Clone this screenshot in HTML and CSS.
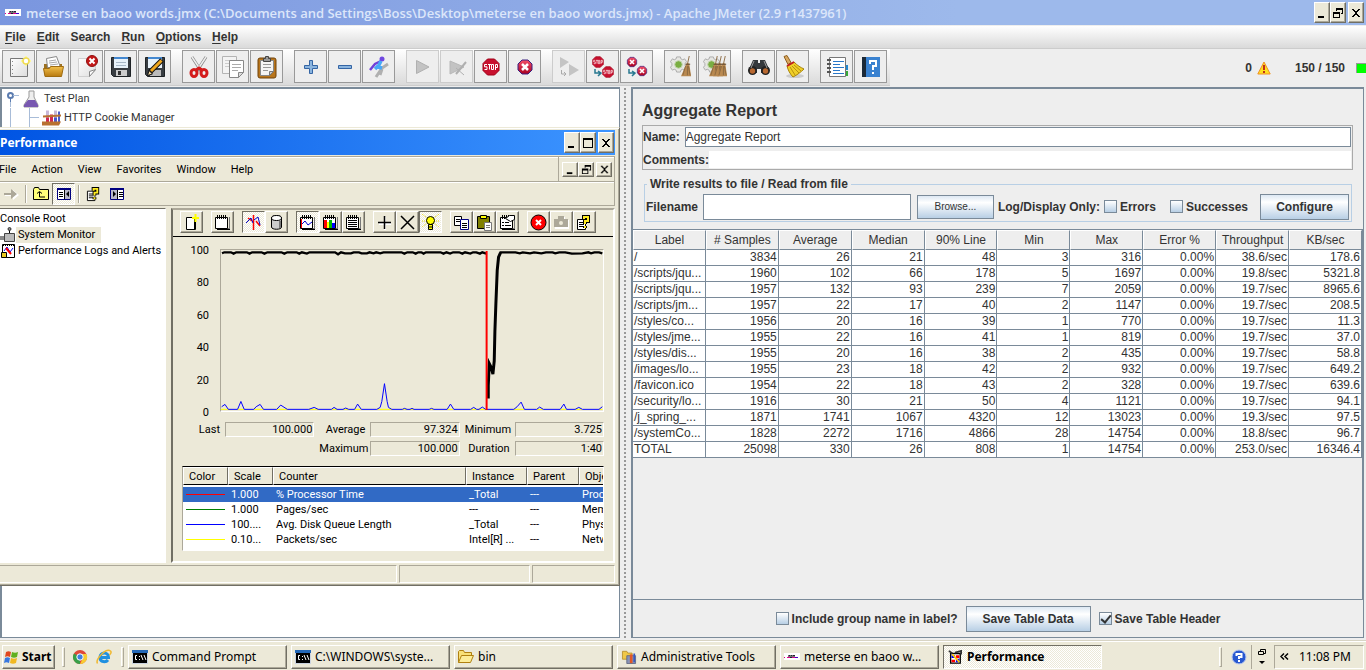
FILE: index.html
```html
<!DOCTYPE html>
<html lang="en">
<head>
<meta charset="utf-8">
<title>Apache JMeter</title>
<link rel="stylesheet" href="styles.css">
</head>
<body>
<svg class="defs" aria-hidden="true">
  <defs>
    <linearGradient id="ball" x1="0" y1="0" x2="0" y2="1"><stop offset="0" stop-color="#f4506a"/><stop offset="1" stop-color="#a80020"/></linearGradient>
    <linearGradient id="gold" x1="0" y1="0" x2="0" y2="1"><stop offset="0" stop-color="#f3c04a"/><stop offset="1" stop-color="#b87a10"/></linearGradient>
    <linearGradient id="sheet" x1="0" y1="0" x2="1" y2="1"><stop offset="0" stop-color="#fff"/><stop offset="1" stop-color="#ddd"/></linearGradient>
    <symbol id="jm" viewBox="0 0 16 7"><path fill="#fff" d="M0 0h16v7H0z"/><path fill="#777" d="M4 2h7v2H4z"/><path fill="#223" d="M5 2h1v1H5zM7 2h1v1H7zM9 2h2v1H9zM6 4h2v1H6z"/><path fill="#d08" d="M0 4h1v1H0zM3 4h3v1H3zM8 4h3v1H8z"/><path fill="#40c" d="M11 4h3v1h-3z"/></symbol>
    <symbol id="min" viewBox="0 0 12 12"><path d="M2 9h6v2H2z"/></symbol>
    <symbol id="max" viewBox="0 0 12 12"><path d="M1 1h10v10H1zM2 3v7h8V3z" fill-rule="evenodd"/></symbol>
    <symbol id="restore" viewBox="0 0 12 12"><path d="M4 1h7v6H9V6h1V3H5v1H4zM1 5h7v6H1zm1 2v3h5V7z" fill-rule="evenodd"/></symbol>
    <symbol id="close" viewBox="0 0 12 12"><path d="M2 2h2v1h1v1h2V3h1V2h2v1H9v1H8v1H7v2h1v1h1v1h1v1H8V9H7V8H5v1H4v1H2V9h1V8h1V7h1V5H4V4H3V3H2z"/></symbol>
    <symbol id="stop8" viewBox="0 0 18 18"><path fill="#c8102e" stroke="#a00018" d="M5.5 1h7L17 5.500v7L12.500 17h-7L1 12.500v-7z"/><path fill="none" stroke="#fff" stroke-width="1" d="M5 6.500H2.500v2.300H5v2.700H2.500M6 6.500h3M7.500 6.500v5M9.500 6.500h2v5h-2zM13.500 12V6.500h2v3h-2"/></symbol>
    <symbol id="xball" viewBox="0 0 18 18"><path fill="url(#ball)" stroke="#3a2080" d="M6 2h6l4 4v6l-4 4H6l-4-4V6z"/><path stroke="#fff" stroke-width="2.500" d="M6 6l6 6M12 6l-6 6"/></symbol>
    <symbol id="gear" viewBox="0 0 18 18"><path fill="#e6e6e2" stroke="#aaa" d="M7 1h4l.5 2 2 1 2-1 2 3-1.500 2v2l1.500 2-2 3-2-1-2 1-.5 2H7l-.5-2-2-1-2 1-2-3L2 10V8L.5 6l2-3 2 1 2-1z"/><circle cx="9" cy="9" r="4" fill="#7aae42" stroke="#c5d5b0"/></symbol>
    <symbol id="broom" viewBox="0 0 12 24"><path fill="#b98950" d="M6 8h3l2 14H0z"/><path stroke="#8a6840" fill="none" d="M9 0L7 9M5 11L2 21M7 11v10M8 11l2 10"/><path stroke="#5c4630" d="M5 9h5"/></symbol>
    <symbol id="notepad" viewBox="0 0 17 17"><path fill="#000" d="M3 15h12v1H3zM15 4h1v12h-1z"/><path fill="#777" d="M2 14h13V3h1v12H2z"/><path fill="#fff" stroke="#000" d="M1.500 3.500h12v11h-12z"/><path stroke="#000" d="M3.500 1v4M5.500 1v4M7.500 1v4M9.500 1v4M11.500 1v4"/></symbol>
    <symbol id="qpage" viewBox="0 0 17 17"><path fill="#fff" stroke="#000" d="M1.500 5.500h8v10h-8z"/><path stroke="#000" d="M3 8.500h5M3 10.500h5M3 12.500h5"/><path fill="none" stroke="#000" stroke-width="4" d="M8 5V3h4v4H9v3M9 12v2"/><path fill="none" stroke="#ffec20" stroke-width="2" d="M8 5V3h4v4H9v3M9 12v2"/></symbol>
    <symbol id="cmd" viewBox="0 0 16 14"><path fill="#ccd4e0" d="M0 0h16v14H0z"/><path fill="#2468b8" d="M0 0h16v3H0z"/><path fill="#000" d="M1 3h14v10H1z"/><path fill="none" stroke="#fff" d="M5 5.500H3.500v4H5M7.500 6v1M7.500 9v1M9 5l2 5M12 5l2 5"/></symbol>
  </defs>
</svg>

<div class="desktop">
  <header class="titlebar titlebar-idle">
    <svg class="jm"><use href="#jm"/></svg>
    <h1 class="titlebar-text">meterse en baoo words.jmx (C:\Documents and Settings\Boss\Desktop\meterse en baoo words.jmx) - Apache JMeter (2.9 r1437961)</h1>
    <div class="win-controls">
      <button class="wbtn" aria-label="Minimize"><svg><use href="#min"/></svg></button><button class="wbtn" aria-label="Restore"><svg><use href="#restore"/></svg></button><button class="wbtn wbtn-close" aria-label="Close"><svg><use href="#close"/></svg></button>
    </div>
  </header>

  <nav class="menubar">
    <button><u>F</u>ile</button><button><u>E</u>dit</button><button>Search</button><button><u>R</u>un</button><button><u>O</u>ptions</button><button><u>H</u>elp</button>
  </nav>

  <div class="toolrow">
    <div class="toolbar">
      <div class="tgroup">
        <button aria-label="New"><svg viewBox="0 0 24 24"><path fill="url(#sheet)" stroke="#777" d="M3.500 3.500h17v18h-17z"/><path stroke="#888" stroke-dasharray="1 3" d="M5.500 6v13"/><path stroke="#fff9a0" stroke-width="2" d="M19 1v10M14 6h10"/><circle cx="19" cy="6" r="3" fill="#fff" stroke="#f0dc50" stroke-width="1.500"/></svg></button>
        <button aria-label="Open"><svg viewBox="0 0 24 24"><path fill="#9c7020" d="M3 9h4v10H3zM17 9h4v10h-4z"/><path fill="#fff" stroke="#888" d="M5.500 3.500l10-2 4 11h-13z"/><path stroke="#aaa" d="M8 6l7-1M8 8l8-1M9 10l8-1"/><path fill="url(#gold)" stroke="#a06c10" d="M2.500 13.500h6l1-2h13l-2 10H4z"/></svg></button>
        <button aria-label="Close"><svg viewBox="0 0 24 24"><path fill="url(#sheet)" stroke="#d0d0d0" d="M3.500 3.500h17v12l-6 6h-11z"/><path fill="#fff" stroke="#888" d="M20.500 14.500l-6 7v-5z"/><circle cx="17" cy="6" r="5.500" fill="#c41818" stroke="#901010"/><path stroke="#fff" stroke-width="2" d="M14.500 3.500l5 5M19.500 3.500l-5 5"/></svg></button>
        <button aria-label="Save"><svg viewBox="0 0 24 24"><path fill="#383d42" stroke="#1e2225" d="M2.500 2.500h19v19h-17l-2-2z"/><path fill="#e8f2fa" d="M5 3h14v10H5z"/><path fill="#4488d0" d="M5 2h14v2H5z"/><path stroke="#a8b8c8" d="M7 7.500h10M7 10.500h10"/><path fill="#ccc" d="M7 15h11v6H7z"/><path fill="#333" d="M9 16h3v4H9z"/></svg></button>
        <button aria-label="Save as"><svg viewBox="0 0 24 24"><path fill="#383d42" stroke="#1e2225" d="M2.500 2.500h19v19h-17l-2-2z"/><path fill="#e8f2fa" d="M5 3h14v10H5z"/><path fill="#4488d0" d="M5 2h14v2H5z"/><path fill="#bbb" d="M7 15h11v6H7z"/><path stroke="#111" stroke-width="5" d="M19 5L7 17"/><path stroke="#f0a820" stroke-width="3" d="M18.500 5.500L8 16"/><path fill="#f4d8a0" stroke="#111" d="M4.500 20.500l1.500-5 3.500 3.500z"/></svg></button>
      </div>
      <div class="tgroup">
        <button aria-label="Cut"><svg viewBox="0 0 24 24"><path stroke="#888" stroke-width="3" d="M5 2l9 14M19 2l-9 14"/><path stroke="#eee" stroke-width="1.500" d="M5 2l8 12M19 2l-8 12"/><g fill="none" stroke="#d41c1c" stroke-width="3"><ellipse cx="7" cy="18" rx="3" ry="3.500"/><ellipse cx="17" cy="18" rx="3" ry="3.500"/><path d="M9 15l3-2 3 2"/></g></svg></button>
        <button aria-label="Copy"><svg viewBox="0 0 24 24"><path fill="#f3f3f3" stroke="#b4b4b4" d="M1.500 1.500h14v17h-14z"/><path stroke="#ccc" d="M4 5.500h9M4 8.500h9M4 11.500h9"/><path fill="#fff" stroke="#888" d="M8.500 5.500h14v12l-5 5h-9z"/><path stroke="#aaa" d="M11 9.500h9M11 12.500h9M11 15.500h6"/><path fill="#ddd" stroke="#888" d="M22.500 17.500h-5v5z"/></svg></button>
        <button aria-label="Paste"><svg viewBox="0 0 24 24"><rect x="3" y="3" width="18" height="20" rx="2" fill="#b8751c" stroke="#704208"/><path fill="#f5f5f5" stroke="#888" d="M5.500 5.500h13v11l-4 4h-9z"/><path stroke="#999" d="M8 9.500h8M8 12.500h8M8 15.500h5"/><path fill="#999" stroke="#444" d="M8.500 3.500h2v-2h3v2h2v3h-7z"/><path fill="#ccc" stroke="#777" d="M18.500 16.500h-4v4z"/></svg></button>
      </div>
      <div class="tgroup">
        <button aria-label="Expand all"><svg viewBox="0 0 24 24"><path fill="#8ab4de" stroke="#3465a4" d="M10.500 5.500h3v5h5v3h-5v5h-3v-5h-5v-3h5z"/></svg></button>
        <button aria-label="Collapse all"><svg viewBox="0 0 24 24"><path fill="#8ab4de" stroke="#3465a4" d="M5.500 10.500h13v3h-13z"/></svg></button>
        <button aria-label="Toggle"><svg viewBox="0 0 24 24"><path stroke="#b0b0b0" stroke-width="3" fill="none" d="M9 22l6-9 6-4M15 14l-2 6"/><path stroke="#7040d8" stroke-width="2.500" fill="none" d="M3 15l5-6 6-3"/><circle cx="15" cy="4" r="2.500" fill="#7048e0"/><path stroke="#48a8f8" stroke-width="3.500" fill="none" d="M14 6l-3 6 4 1M11 11l-3 3"/></svg></button>
      </div>
      <div class="tgroup">
        <button disabled aria-label="Start"><svg viewBox="0 0 24 24"><path fill="#c3c3c3" stroke="#b0b0b0" d="M5.500 5.500L18 12 5.500 18.500z"/></svg></button>
        <button disabled aria-label="Start no pauses"><svg viewBox="0 0 24 24"><path fill="#c3c3c3" stroke="#b8b8b8" d="M5 6l14 6-14 7z"/><path stroke="#b0b0b0" stroke-width="2" d="M11 19L21 7"/><path stroke="#b0b0b0" d="M11 13l8 7"/></svg></button>
        <button aria-label="Stop"><svg viewBox="-3 -3 24 24"><use href="#stop8" width="18" height="18"/></svg></button>
        <button aria-label="Shutdown"><svg viewBox="-3 -3 24 24"><use href="#xball" width="18" height="18"/></svg></button>
      </div>
      <div class="tgroup">
        <button disabled aria-label="Remote start all"><svg viewBox="0 0 24 24"><path fill="#c4c4c4" d="M3 2l9 5-9 6zM12 9l10 6-10 6z"/><path stroke="#aaa" fill="none" d="M4.500 15v4H9M7 17l2 2-2 2"/></svg></button>
        <button aria-label="Remote stop all"><svg viewBox="0 0 24 24"><use href="#stop8" x="1" y="1" width="12" height="12"/><use href="#stop8" x="11" y="11" width="12" height="12"/><path stroke="#287890" stroke-width="1.500" fill="none" d="M4 14v4h6M7 16l3 2-3 3"/></svg></button>
        <button aria-label="Remote shutdown all"><svg viewBox="0 0 24 24"><use href="#xball" x="1" y="1" width="12" height="12"/><use href="#xball" x="11" y="10" width="12" height="12"/><path stroke="#287890" stroke-width="1.500" fill="none" d="M4 14v4h6M7 16l3 2-3 3"/></svg></button>
      </div>
      <div class="tgroup">
        <button aria-label="Clear"><svg viewBox="0 0 24 24"><use href="#gear" x="1" y="1" width="17" height="17"/><use href="#broom" x="12" y="1" width="11" height="22"/></svg></button>
        <button aria-label="Clear all"><svg viewBox="0 0 24 24"><use href="#gear" x="0" y="1" width="17" height="17"/><use href="#broom" x="6" y="1" width="11" height="22"/><use href="#broom" x="10" y="1" width="11" height="22"/><use href="#broom" x="14" y="1" width="11" height="22"/></svg></button>
      </div>
      <div class="tgroup">
        <button aria-label="Search"><svg viewBox="0 0 24 24"><path fill="#35393c" d="M6 5h5v3h2V5h5l4 9v4h-8v-4h-4v4H2v-4z"/><circle cx="5.500" cy="15.500" r="4.500" fill="#222"/><circle cx="18.500" cy="15.500" r="4.500" fill="#222"/><circle cx="5.500" cy="16" r="2.700" fill="#b86830"/><circle cx="18.500" cy="16" r="2.700" fill="#b86830"/><path stroke="#999" d="M7 6l-3 7M17 6l3 7"/></svg></button>
        <button aria-label="Reset search"><svg viewBox="0 0 24 24"><ellipse cx="14" cy="21" rx="9" ry="2" fill="#ccc"/><path fill="#d8a860" stroke="#906020" d="M3 1.500l3-1 4 7-3 2z"/><path fill="#f0d028" stroke="#a88408" d="M6 11l7-4c4 4 6 5 10 7-3 3-7 6-11 8-3-3-5-7-6-11z"/><path stroke="#c02020" stroke-width="2" d="M6 11l7-4"/><path stroke="#b89010" fill="none" d="M9 12l5 8M11 11l7 7M13 10l7 6"/></svg></button>
      </div>
      <div class="tgroup">
        <button aria-label="Function helper"><svg viewBox="0 0 24 24"><path fill="#2288d0" d="M20 10h3v5h-3z"/><path fill="#38a838" d="M20 16h3v5h-3z"/><path fill="#fff" stroke="#777" d="M4.500 2.500h16v19h-16z"/><path stroke="#2a78c8" d="M8 6.500h11M8 9.500h7M8 12.500h11M8 15.500h7M8 18.500h11"/><path stroke="#555" stroke-width="2" d="M2 5h4M2 9h4M2 13h4M2 17h4"/></svg></button>
        <button aria-label="Help"><svg viewBox="0 0 24 24"><path fill="#1c2a38" d="M3 2h18v20H3z"/><path fill="#3a82d0" d="M7 2h14v20H7z"/><path fill="none" stroke="#fff" stroke-width="2" d="M11 9V6h6v5h-3v4M14 17v2"/></svg></button>
      </div>
    </div>
    <div class="run-state">
      <span>0</span>
      <svg class="warn" viewBox="0 0 14 14"><path fill="#ffe020" stroke="#f09020" stroke-linejoin="round" d="M7 1l6.200 12H.8z"/><path fill="#c03018" d="M6 4h2v5H6zM6 10h2v2H6z"/></svg>
      <span class="threads">150 / 150</span>
      <span class="lamp"></span>
    </div>
  </div>

  <main class="split">
    <section class="left">
      <ul class="tree">
        <li><svg class="knob" viewBox="0 0 12 17"><circle cx="3.500" cy="5.500" r="2.500" fill="#fff" stroke="#5b7cb0" stroke-width="2"/><path stroke="#5b7cb0" d="M3.500 8v4"/><path stroke="#a8bcd8" d="M6 5.500h6M3.500 12v5"/></svg><svg class="ticon" viewBox="0 0 16 18"><path fill="#eee" stroke="#999" d="M6 1h5v6l4 8v2H1v-2l5-8z"/><path fill="#7858b0" d="M5 10h7l3 5v2H1v-2z"/></svg>Test Plan</li>
        <li class="child"><svg class="ticon wide" viewBox="0 0 20 17"><path fill="#c8b8d8" d="M4 1h3v13H4zM12 1h3v13h-3z"/><path fill="#d02850" d="M8 5h3v9H8zM4 8h3v6H4z"/><path fill="#4858c8" d="M16 2h2v12h-2zM12 8h3v6h-3z"/><path fill="#b87030" d="M1 6l18-1v2L1 8zM0 12h19l-2 4H0z"/></svg>HTTP Cookie Manager</li>
      </ul>

      <section class="perf">
        <header class="titlebar titlebar-active">
          <h2 class="titlebar-text">Performance</h2>
          <div class="win-controls">
            <button class="wbtn" aria-label="Minimize"><svg><use href="#min"/></svg></button><button class="wbtn" aria-label="Maximize"><svg><use href="#max"/></svg></button><button class="wbtn wbtn-close" aria-label="Close"><svg><use href="#close"/></svg></button>
          </div>
        </header>
        <div class="perf-menu">
          <nav><button>File</button><button>Action</button><button>View</button><button>Favorites</button><button>Window</button><button>Help</button></nav>
          <div class="win-controls child-controls">
            <button class="wbtn" aria-label="Minimize console"><svg><use href="#min"/></svg></button><button class="wbtn" aria-label="Restore console"><svg><use href="#restore"/></svg></button><button class="wbtn wbtn-close" aria-label="Close console"><svg><use href="#close"/></svg></button>
          </div>
        </div>
        <div class="perf-tools">
          <button aria-label="Forward"><svg viewBox="0 0 16 16"><path fill="#fff" d="M2 8h8V4l6 5-6 5v-4H2z"/><path fill="#aca899" d="M1 7h7V3l6 5-6 5V9H1z"/></svg></button>
          <i class="vsep"></i>
          <button aria-label="Up one level"><svg viewBox="0 0 16 16"><path fill="#ffff7a" stroke="#000" d="M.5 3.500l1-2h4l1 2h9v10H.5z"/><path fill="none" stroke="#000" d="M4 7.500l2.500-2 2.500 2M6.500 6v5H12"/></svg></button>
          <button class="down" aria-label="Show console tree"><svg viewBox="0 0 16 16"><path fill="#fff" stroke="#000080" d="M1.500 2.500h13v11h-13z"/><path fill="#000080" d="M1 2h14v2H1z"/><path fill="#b8b8c8" d="M9 4h5v9H9z"/><path stroke="#000" d="M8.500 4v9M3 6.500h4M3 8.500h4M3 10.500h4"/><path d="M13 5v6l-3-3z"/></svg></button>
          <i class="vsep"></i>
          <button aria-label="Help"><svg><use href="#qpage"/></svg></button>
          <button aria-label="Show action pane"><svg viewBox="0 0 16 16"><path fill="#fff" stroke="#000080" d="M1.500 2.500h13v11h-13z"/><path fill="#000080" d="M1 2h14v2H1z"/><path fill="#b8b8c8" d="M2 4h6v9H2z"/><path stroke="#000" d="M8.500 4v9M10 6.500h4M10 8.500h4M10 10.500h4"/><path d="M4 5v6l3-3z"/></svg></button>
        </div>
        <div class="perf-body">
          <ul class="console">
            <li>Console Root</li>
            <li class="picked"><svg viewBox="0 0 16 16"><path stroke="#000" d="M9.500 2v5M0 12h3"/><circle cx="9.500" cy="2" r="1.500" fill="#888" stroke="#333"/><path fill="#bbb" stroke="#444" d="M4.500 6.500h10v8h-10z"/><path fill="#888" d="M0 9h4v4H0z"/></svg><span>System Monitor</span></li>
            <li><svg viewBox="0 0 16 16"><path fill="#fff" stroke="#000" d="M2.500 1.500h12v13h-12z"/><path stroke="#000" stroke-width="2" stroke-dasharray="1 1" d="M3 2h11"/><path fill="none" stroke="#00f" d="M4 8l3-4 3 5 3-4"/><path fill="none" stroke="#f00" stroke-width="2" d="M6 5l5 6"/><path fill="#e8c820" stroke="#000" d="M1.500 9.500h5v5h-5z"/></svg><span>Performance Logs and Alerts</span></li>
          </ul>
          <div class="monitor">
            <div class="mon-tools">
              <div><button aria-label="New counter set"><svg viewBox="0 0 17 17"><path fill="#fff" stroke="#000" d="M3.500 3.500h9v12h-9z"/><path stroke="#000" d="M11.500 5v11"/><path stroke="#ff0" stroke-width="2" d="M9 4h7M12.500 0v8"/></svg></button></div>
              <div><button aria-label="Clear display"><svg><use href="#notepad"/></svg></button></div>
              <div><button class="down" aria-label="View current activity"><svg viewBox="0 0 17 17"><path stroke="#f00" stroke-width="1.500" d="M8.500 1v15M3 4l4 3M11 7l4 5"/><path fill="none" stroke="#00c" d="M1 9l5-5 2 5M9 6l4-3 2 8"/></svg></button><button aria-label="View log data"><svg viewBox="0 0 17 17"><path fill="#ccc" stroke="#000" d="M3.500 4c0-3 10-3 10 0v9c0 3-10 3-10 0z"/><ellipse cx="8.500" cy="4" rx="5" ry="2.500" fill="#fff" stroke="#000"/><path fill="#777" d="M11 7h2v7h-2z"/></svg></button></div>
              <div><button class="down" aria-label="View graph"><svg viewBox="0 0 17 17"><use href="#notepad" width="17" height="17"/><path fill="none" stroke="#00c" d="M3 10l3-3 3 4 4-3"/><path stroke="#f00" d="M2.500 5v9"/></svg></button><button aria-label="View histogram"><svg viewBox="0 0 17 17"><use href="#notepad" width="17" height="17"/><path fill="#f00" d="M2 6h3v8H2z"/><path fill="#ff0" d="M5 8h2v6H5z"/><path fill="#0b0" d="M7 6h3v8H7z"/><path fill="#00f" d="M10 9h3v5h-3z"/></svg></button><button aria-label="View report"><svg viewBox="0 0 17 17"><use href="#notepad" width="17" height="17"/><path stroke="#000" d="M3 6.500h9M3 8.500h9M3 10.500h9M3 12.500h9"/></svg></button></div>
              <div><button aria-label="Add"><svg viewBox="0 0 17 17"><path stroke="#fff" stroke-width="2" d="M9 3v13M3 10h12"/><path stroke="#000" stroke-width="1.500" d="M8.500 2v13M2 8.500h13"/></svg></button><button aria-label="Delete"><svg viewBox="0 0 17 17"><path stroke="#000" stroke-width="1.500" d="M2 2l13 13M15 2L2 15"/></svg></button><button class="down" aria-label="Highlight"><svg viewBox="0 0 17 17"><path stroke="#e8d800" stroke-dasharray="1 1" d="M0 0l17 13M17 0L0 13M0 7h17"/><circle cx="8.500" cy="6.500" r="4" fill="#ff0" stroke="#000"/><path fill="#ff0" stroke="#000" d="M6.500 10.500h4v5h-4zM6 13h5"/></svg></button></div>
              <div><button aria-label="Copy properties"><svg viewBox="0 0 17 17"><path fill="#fff" stroke="#000" d="M1.500 2.500h7v9h-7z"/><path fill="#fff" stroke="#000080" d="M7.500 5.500h8v10h-8z"/><path stroke="#000" d="M3 5.500h4M3 7.500h4M9 9.500h5M9 11.500h5M9 13.500h5"/></svg></button><button aria-label="Paste counter list"><svg viewBox="0 0 17 17"><path fill="#808000" stroke="#000" d="M1.500 2.500h12v12h-12z"/><path fill="#ff0" stroke="#000" d="M4.500 1.500h6v3h-6z"/><path fill="#fff" stroke="#777" d="M8.500 8.500h7v8h-7z"/><path stroke="#777" d="M10 11.500h4M10 13.500h4"/></svg></button><button aria-label="Properties"><svg viewBox="0 0 17 17"><use href="#notepad" width="17" height="17"/><path stroke="#000" d="M3 8.500h2M6 8.500h4M3 11.500h2M6 11.500h6"/><path fill="#fff" stroke="#000" d="M6.500 4.500l4-3h5v4l-4 2z"/></svg></button></div>
              <div><button aria-label="Freeze display"><svg viewBox="0 0 17 17"><circle cx="8.500" cy="8.500" r="7.500" fill="#f00" stroke="#000"/><path stroke="#fff" stroke-width="2" d="M6 6l5 5M11 6l-5 5"/></svg></button><button aria-label="Update data"><svg viewBox="0 0 17 17"><path fill="#fff" d="M2 6h4V3h6v3h4v9H2z"/><path fill="#aca899" d="M1 5h4V2h6v3h4v8H1z"/><circle cx="8" cy="9" r="2" fill="#ece9d8"/></svg></button><button aria-label="Help on monitor"><svg><use href="#qpage"/></svg></button></div>
            </div>
            <div class="mon-main">
              <div class="graph">
                <div class="axis"><span>100</span><span>80</span><span>60</span><span>40</span><span>20</span><span>0</span></div>
                <svg class="chart" viewBox="150 27 1152 489" preserveAspectRatio="none" role="img" aria-label="Counter history">
                  <path stroke="#ff0" stroke-width="3" d="M150 511h24M200 511h20M249 511h30M318 511h34M415 511h30M483 511h18M518 511h18M553 511h20M622 511h44M695 511h16M718 511h14M778 511h14M832 511h18M903 511h18M925 511h28M1032 511h32M1102 511h20M1174 511h18M1218 511h20M1290 511h10"/>
                  <path fill="none" stroke="#00f" stroke-width="3" d="M152 503L162 496L172 511H200L210 487L220 511H249L256 503L268 496L278 511H318L330 498L350 511H415L431 505L443 511H483L491 505L500 511H518L526 507L535 511H553L562 495L573 511H620L630 505L635 487L643 433L651 487L655 505L665 511H697L703 508L711 511H720L726 508L732 511H778L785 508L792 511H832L842 495L852 511H903L912 505L921 511H928L938 504L948 511H1033L1043 503L1055 489L1065 511H1102L1111 504L1122 511H1173L1184 495L1192 511H1218L1229 505L1240 511H1290L1300 503"/>
                  <path fill="none" stroke="#000" stroke-width="7" d="M153 37L160 34H180L188 38L196 34H228L236 38L244 34H272L281 38L290 34H332L341 38L350 34H378L386 38L394 34L409 38L417 34H494L503 40L512 34L524 37H542L550 34H566L574 37H590L598 34L610 37L618 34L630 37L640 34H694L703 38L712 34H728L737 38L745 34H754L761 38L768 34H812L821 38L830 34L841 38L850 34H868L878 38L886 34L902 38L910 34H920L931 38L938 34L950 38"/>
                  <path fill="none" stroke="#000" stroke-width="9" d="M956 478v-40l3-66 6 12 5 20 4-40 2-90 3-85 4-100 4-40 6-14"/>
                  <path fill="none" stroke="#000" stroke-width="7" d="M990 34H1038L1051 37L1060 34L1082 37L1094 34L1116 37L1130 34H1150L1158 37L1170 34H1188L1208 38L1240 37L1258 34L1266 37L1276 34H1290L1300 37"/>
                  <path stroke="#f00" stroke-width="6" d="M951 30v483"/>
                </svg>
              </div>
              <dl class="readings">
                <dt>Last</dt><dd>100.000</dd><dt>Average</dt><dd>97.324</dd><dt>Minimum</dt><dd>3.725</dd>
                <dt class="third">Maximum</dt><dd>100.000</dd><dt>Duration</dt><dd>1:40</dd>
              </dl>
              <div class="legend-box">
                <table class="legend">
                  <colgroup><col class="c1"><col class="c2"><col><col class="c4"><col class="c5"><col class="c6"></colgroup>
                  <thead><tr><th>Color</th><th>Scale</th><th>Counter</th><th>Instance</th><th>Parent</th><th>Object</th></tr></thead>
                  <tbody>
                    <tr class="sel"><td><i class="swatch red"></i></td><td>1.000</td><td>% Processor Time</td><td>_Total</td><td>---</td><td>Processor</td></tr>
                    <tr><td><i class="swatch green"></i></td><td>1.000</td><td>Pages/sec</td><td>---</td><td>---</td><td>Memory</td></tr>
                    <tr><td><i class="swatch blue"></i></td><td>100....</td><td>Avg. Disk Queue Length</td><td>_Total</td><td>---</td><td>PhysicalDisk</td></tr>
                    <tr><td><i class="swatch yellow"></i></td><td>0.10...</td><td>Packets/sec</td><td>Intel[R] ...</td><td>---</td><td>Network</td></tr>
                  </tbody>
                </table>
              </div>
            </div>
          </div>
        </div>
        <footer class="status"><span></span><span></span><span></span></footer>
      </section>
    </section>

    <div class="divider"></div>

    <section class="report">
      <h2 class="report-title">Aggregate Report</h2>
      <div class="ident">
        <div class="field"><label for="name">Name:</label><input id="name" type="text" value="Aggregate Report"></div>
        <div class="field plain"><label for="comments">Comments:</label><input id="comments" type="text"></div>
      </div>
      <fieldset class="filebox">
        <legend>Write results to file / Read from file</legend>
        <div class="filerow">
          <label for="filename">Filename</label><input id="filename" type="text">
          <button class="jbtn small">Browse...</button>
          <span class="only">Log/Display Only:</span>
          <label class="check"><input type="checkbox">Errors</label>
          <label class="check"><input type="checkbox">Successes</label>
          <button class="jbtn conf">Configure</button>
        </div>
      </fieldset>
      <div class="grid-scroll">
        <table class="results">
          <thead><tr><th>Label</th><th># Samples</th><th>Average</th><th>Median</th><th>90% Line</th><th>Min</th><th>Max</th><th>Error %</th><th>Throughput</th><th>KB/sec</th></tr></thead>
          <tbody>
            <tr><td>/</td><td>3834</td><td>26</td><td>21</td><td>48</td><td>3</td><td>316</td><td>0.00%</td><td>38.6/sec</td><td>178.6</td></tr>
            <tr><td>/scripts/jqu...</td><td>1960</td><td>102</td><td>66</td><td>178</td><td>5</td><td>1697</td><td>0.00%</td><td>19.8/sec</td><td>5321.8</td></tr>
            <tr><td>/scripts/jqu...</td><td>1957</td><td>132</td><td>93</td><td>239</td><td>7</td><td>2059</td><td>0.00%</td><td>19.7/sec</td><td>8965.6</td></tr>
            <tr><td>/scripts/jm...</td><td>1957</td><td>22</td><td>17</td><td>40</td><td>2</td><td>1147</td><td>0.00%</td><td>19.7/sec</td><td>208.5</td></tr>
            <tr><td>/styles/co...</td><td>1956</td><td>20</td><td>16</td><td>39</td><td>1</td><td>770</td><td>0.00%</td><td>19.7/sec</td><td>11.3</td></tr>
            <tr><td>/styles/jme...</td><td>1955</td><td>22</td><td>16</td><td>41</td><td>1</td><td>819</td><td>0.00%</td><td>19.7/sec</td><td>37.0</td></tr>
            <tr><td>/styles/dis...</td><td>1955</td><td>20</td><td>16</td><td>38</td><td>2</td><td>435</td><td>0.00%</td><td>19.7/sec</td><td>58.8</td></tr>
            <tr><td>/images/lo...</td><td>1955</td><td>23</td><td>18</td><td>42</td><td>2</td><td>932</td><td>0.00%</td><td>19.7/sec</td><td>649.2</td></tr>
            <tr><td>/favicon.ico</td><td>1954</td><td>22</td><td>18</td><td>43</td><td>2</td><td>328</td><td>0.00%</td><td>19.7/sec</td><td>639.6</td></tr>
            <tr><td>/security/lo...</td><td>1916</td><td>30</td><td>21</td><td>50</td><td>4</td><td>1121</td><td>0.00%</td><td>19.7/sec</td><td>94.1</td></tr>
            <tr><td>/j_spring_...</td><td>1871</td><td>1741</td><td>1067</td><td>4320</td><td>12</td><td>13023</td><td>0.00%</td><td>19.3/sec</td><td>97.5</td></tr>
            <tr><td>/systemCo...</td><td>1828</td><td>2272</td><td>1716</td><td>4866</td><td>28</td><td>14754</td><td>0.00%</td><td>18.8/sec</td><td>96.7</td></tr>
            <tr><td>TOTAL</td><td>25098</td><td>330</td><td>26</td><td>808</td><td>1</td><td>14754</td><td>0.00%</td><td>253.0/sec</td><td>16346.4</td></tr>
          </tbody>
        </table>
      </div>
      <div class="save-row">
        <label class="check"><input type="checkbox">Include group name in label?</label>
        <button class="jbtn save">Save Table Data</button>
        <label class="check"><input type="checkbox" checked>Save Table Header</label>
      </div>
    </section>
  </main>

  <footer class="taskbar">
    <button class="start"><svg viewBox="0 0 16 16"><path fill="#e04820" d="M2 3c2-1 3-1 5 0L6 8c-2-1-3-1-5 0z"/><path fill="#60b020" d="M8 3c2 1 4 1 6 0l-1 5c-2 1-4 1-6 0z"/><path fill="#3878e0" d="M1 9c2-1 3-1 5 0l-1 5c-2-1-3-1-5 0z"/><path fill="#f0b820" d="M7 9c2 1 4 1 6 0l-1 5c-2 1-4 1-6 0z"/></svg>Start</button>
    <i class="tsep"></i>
    <div class="quick">
      <button aria-label="Chrome"><svg viewBox="0 0 16 16"><circle cx="8" cy="8" r="7" fill="#e04838"/><path fill="#38a048" d="M8 8L2 4.400A7 7 0 0 0 8 15z"/><path fill="#f8cc30" d="M8 15l3.500-7L9 5h5.500A7 7 0 0 1 8 15z"/><circle cx="8" cy="8" r="3.200" fill="#4080e0" stroke="#fff"/></svg></button>
      <button aria-label="Internet Explorer"><svg viewBox="0 0 16 16"><path fill="none" stroke="#2090e0" stroke-width="3" d="M3.500 8.500h9c0-6-8.500-6-8.500 0 0 5 6 5 8 2.500"/><path fill="none" stroke="#f0b830" stroke-width="1.500" d="M1.500 14.500C-1 10 10-1 14.500 2c1 1 0 3-1 4"/></svg></button>
    </div>
    <i class="tsep"></i>
    <div class="tasks">
      <button><svg class="ic"><use href="#cmd"/></svg><span>Command Prompt</span></button>
      <button><svg class="ic"><use href="#cmd"/></svg><span>C:\WINDOWS\syste...</span></button>
      <button><svg class="ic" viewBox="0 0 16 14"><path fill="#f8e078" stroke="#b08010" d="M.5 12.500v-11l1-1h4l1 2h7v3"/><path fill="#fcec98" stroke="#b08010" d="M.5 12.500l3-7h12l-3 7z"/></svg><span>bin</span></button>
      <button><svg class="ic" viewBox="0 0 16 16"><path fill="#f0c848" stroke="#b89030" d="M.5 1.500h5l1 2h5v7H.5z"/><path fill="#8894b8" stroke="#606880" d="M5.500 6.500h10v9h-10z"/><path fill="#e05828" d="M9 5h3v10H9z"/><path fill="#3858c0" d="M13 4h2v10h-2z"/></svg><span>Administrative Tools</span></button>
      <button><svg class="jm"><use href="#jm"/></svg><span>meterse en baoo w...</span></button>
      <button class="current"><svg class="ic" viewBox="0 0 16 16"><path fill="#fff" stroke="#000" stroke-width="1.500" d="M3 4h11v11H3z"/><path fill="#00f" d="M4 6h4v3H4zM9 10h4v4H9z"/><path fill="#f00" d="M4 11h4v3H4zM9 6h4v3H9z"/><path stroke="#fc0" stroke-width="2" d="M5 5l8 9"/><path stroke="#333" stroke-width="2" fill="none" d="M1 1l4 3M8 3l7-2v4"/></svg><span>Performance</span></button>
    </div>
    <i class="tsep lone"></i>
    <button class="qhelp" aria-label="Help and support"><svg viewBox="0 0 16 16"><circle cx="8" cy="8" r="7" fill="#2858d0" stroke="#b8c8f0"/><path fill="none" stroke="#fff" stroke-width="2" d="M5.500 7V5h5v3H8v2M8 11v2"/></svg></button>
    <i class="tsep thin"></i>
    <button class="stack" aria-label="Restore toolbar"><svg viewBox="0 0 10 17"><path fill="none" stroke="#000" d="M3.500 3V1.500h5v4H7M1.500 3.500h5v3h-5z"/><path d="M2 13h6l-3 3z"/></svg></button>
    <div class="tray"><button aria-label="Show hidden icons"><svg viewBox="0 0 9 7"><path fill="none" stroke="#000" stroke-width="1.500" d="M4 .5l-3 3 3 3M8 .5l-3 3 3 3"/></svg></button><time>11:08 PM</time></div>
  </footer>
</div>
</body>
</html>
```
FILE: styles.css
```css
* { box-sizing: border-box; }
body { margin: 0; font-family: "Liberation Sans", Arial, sans-serif; font-size: 12px; color: #333; background: #eee; }
button, input { font: inherit; color: inherit; margin: 0; padding: 0; border-radius: 0; }
button { background: none; border: 0; white-space: nowrap; }
ul, dl, dd { margin: 0; padding: 0; list-style: none; }
svg { display: block; flex: none; }
.defs { position: absolute; width: 0; height: 0; }
.desktop { display: flex; flex-direction: column; height: 100vh; min-height: 640px; overflow: hidden; }

/* window captions */
.titlebar { display: flex; align-items: center; height: 25px; flex: none; }
.titlebar-text { flex: 1; min-width: 0; margin: 0; overflow: hidden; white-space: nowrap; font: bold 12px/20px "Noto Sans", sans-serif; }
.titlebar-idle { background: linear-gradient(90deg, #7a96df, #9db9eb 70%, #9db9eb); color: #dce6fa; padding: 0 2px 0 5px; gap: 5px; }
.titlebar-idle .titlebar-text { font: 600 13px/20px "Open Sans", sans-serif; }
.titlebar-active { background: linear-gradient(90deg, #0054e3, #3d95ff); color: #fff; padding: 0 1px 0 3px; }
.jm { width: 16px; height: 7px; }
.win-controls { display: flex; flex: none; }
.wbtn { display: flex; align-items: center; justify-content: center; width: 16px; height: 21px; background: #ece9d8; border: 1px solid; border-color: #fff #716f64 #716f64 #fff; box-shadow: inset -1px -1px #aca899; color: #000; }
.wbtn svg { width: 12px; height: 12px; }
.wbtn-close { margin-left: 2px; }

/* JMeter menu and toolbar */
.menubar { display: flex; gap: 11px; height: 24px; flex: none; padding: 0 5px; background: linear-gradient(#fff, #dadada); border-bottom: 1px solid #ccc; border-top: 1px solid #eee; font-weight: bold; }
.menubar u { text-underline-offset: 2px; }
.toolrow { display: flex; align-items: flex-start; justify-content: space-between; height: 38px; flex: none; }
.toolbar { display: flex; gap: 11px; height: 37px; padding: 1px 3px 0 2px; background: linear-gradient(#fff, #dadada); border-bottom: 1px solid #ccc; }
.tgroup { display: flex; gap: 1px; }
.tgroup button { display: flex; align-items: center; justify-content: center; width: 33px; height: 33px; border: 1px solid #999; background: #eee; }
.tgroup button:disabled { border-color: #ccc; }
.tgroup svg { width: 24px; height: 24px; }
.run-state { display: flex; align-items: center; height: 38px; font-weight: bold; }
.warn { width: 14px; height: 14px; margin: 0 24px 0 5px; }
.threads { margin-right: 11px; }
.lamp { width: 10px; height: 10px; background: #0f0; border: 1px solid #999; border-width: 1px 0 0 1px; }

/* main split */
.split { flex: 1; min-height: 0; display: grid; grid-template-columns: minmax(0, 620fr) 11px minmax(0, 735fr); padding-bottom: 2px; }
.left { position: relative; background: #fff; border: 1px solid #7a8a99; border-width: 2px 1px 1px 2px; }
.divider { background: radial-gradient(circle, #999 1px, transparent 1px) 3px 0 / 4px 4px repeat-y #eee; }
.tree { line-height: 19px; padding-left: 5px; font-size: 11px; font-family: Roboto, sans-serif; }
.tree li { display: flex; align-items: center; height: 19px; }
.knob { width: 12px; height: 19px; margin-right: 4px; }
.ticon { width: 16px; height: 18px; margin-right: 5px; }
.tree .child { padding-left: 35px; background: linear-gradient(#a8bcd8, #a8bcd8) 22px 9px / 10px 1px no-repeat, linear-gradient(#a8bcd8, #a8bcd8) 22px 0 / 1px 100% no-repeat, linear-gradient(#a8bcd8, #a8bcd8) 3px 0 / 1px 100% no-repeat; }
.ticon.wide { width: 20px; margin-right: 2px; }

/* Performance console window, floating over the tree */
.perf { position: absolute; left: -10px; right: -1px; top: 38px; padding: 2px 4px; background: #ece9d8; color: #000; border: 1px solid; border-color: #ece9d8 #716f64 #716f64 #ece9d8; box-shadow: inset 1px 1px #fff, inset -1px -1px #aca899; font: 11px/15px Roboto, sans-serif; }
.perf-menu, .perf-tools { display: flex; align-items: center; border: 1px solid #aca899; border-width: 1px 1px 0 0; box-shadow: inset 0 1px #fff; }
.perf-menu { justify-content: space-between; height: 25px; margin-top: 1px; }
.perf-menu nav { display: flex; gap: 15px; padding-left: 2px; }
.child-controls { align-items: center; align-self: stretch; padding: 0 2px 0 3px; border-left: 1px solid #aca899; }
.child-controls .wbtn { height: 15px; }
.child-controls svg { width: 11px; height: 11px; }
.perf-tools { height: 25px; padding-left: 2px; border-bottom-width: 1px; }
.perf-tools button { display: flex; align-items: center; justify-content: center; width: 23px; height: 22px; }
.perf-tools svg { width: 16px; height: 16px; }
.vsep { width: 1px; height: 18px; margin: 0 3px; background: #aca899; box-shadow: 1px 0 #fff; }
.perf .down { background: repeating-conic-gradient(#fff 0 25%, #ece9d8 0 50%) 0 0 / 2px 2px; border: 1px solid; border-color: #716f64 #fff #fff #716f64; box-shadow: none; }
.perf-body { display: grid; grid-template-columns: 169px minmax(0, 1fr); gap: 5px; margin-top: 2px; }
.console { padding: 2px 3px 0 2px; background: #fff; border: 1px solid; border-color: #716f64 #fff #fff #716f64; white-space: nowrap; overflow: hidden; }
.console li { display: flex; height: 16px; line-height: 16px; }
.console svg { width: 16px; height: 16px; }
.console span { padding: 0 2px; }
.picked span { background: #ece9d8; padding-right: 6px; }
.monitor { border: 2px solid; border-color: #aca899 #fff #fff #716f64; }
.mon-tools { display: flex; gap: 8px; padding: 1px 7px 2px; border-bottom: 1px solid #000; height: 27px; overflow: hidden; }
.mon-tools div { display: flex; }
.mon-tools button { display: flex; align-items: center; justify-content: center; width: 23px; height: 22px; border: 1px solid; border-color: #fff #716f64 #716f64 #fff; box-shadow: inset -1px -1px #aca899; }
.mon-tools svg { width: 17px; height: 17px; }
.mon-main { padding: 8px 9px 10px; }
.graph { display: grid; grid-template-columns: 27px minmax(0, 1fr); gap: 11px; }
.axis { display: flex; flex-direction: column; justify-content: space-between; height: 174px; line-height: 12px; text-align: right; }
.chart { width: 100%; height: 163px; margin-top: 4px; border: 1px solid; border-color: #aca899 #fff #fff #aca899; }
.readings { display: grid; grid-template-columns: 38px 1fr 46px 1fr 45px 1fr; gap: 4px 5px; margin: 3px 0 10px; line-height: 15px; }
.readings dt { text-align: right; }
.readings .third { grid-column: 3; }
.readings dd { height: 15px; text-align: right; line-height: 14px; padding-right: 1px; border: 1px solid; border-color: #aca899 #fff #fff #aca899; }
.legend-box { height: 85px; overflow: hidden; background: #fff; border: 1px solid; border-color: #000 #fff #fff #aca899; }
.legend { width: calc(100% + 30px); table-layout: fixed; border-collapse: separate; border-spacing: 0; }
.legend .c1 { width: 45px; }
.legend .c2 { width: 45px; }
.legend .c4 { width: 61px; }
.legend .c5 { width: 52px; }
.legend .c6 { width: 54px; }
.legend th { height: 18px; padding: 0 5px; text-align: left; font-weight: normal; line-height: 15px; background: #ece9d8; border: 1px solid; border-color: #fff #716f64 #000 #fff; }
.legend tbody::before { content: ""; display: block; height: 2px; }
.legend td { height: 15px; padding: 0 3px; line-height: 15px; white-space: nowrap; overflow: hidden; }
.legend .sel td { background: #316ac5; color: #fff; }
.swatch { display: block; height: 1px; width: 39px; }
.red { background: #f00; }
.green { background: #008000; }
.blue { background: #00f; }
.yellow { background: #ff0; }
.status { display: grid; grid-template-columns: minmax(0, 403fr) minmax(0, 131fr) minmax(0, 84fr); gap: 2px; margin-top: 2px; }
.status span { height: 18px; border: 1px solid; border-color: #aca899 #fff #fff #aca899; }

/* Aggregate Report panel */
.report { display: flex; flex-direction: column; margin-right: 2px; border: 1px solid #7a8a99; border-width: 2px 1px 1px 2px; font-weight: bold; min-width: 0; }
.report-title { margin: 12px 9px 5px; font-size: 16px; line-height: 19px; }
.ident { margin: 0 10px 0 9px; border: 1px solid #aaa; padding: 1px 1px 1px 0; }
.field { display: flex; align-items: center; gap: 5px; height: 20px; }
.field input { flex: 1; min-width: 0; height: 20px; border: 1px solid #7a8a99; padding: 0; background: #fff; font-weight: normal; }
.field.plain { gap: 0; margin-top: 4px; height: 17px; }
.field.plain input { height: 17px; border: 0; }
.filebox { margin: 7px 11px 0; padding: 2px 2px 1px 1px; border: 1px solid #b8cfe5; min-width: 0; }
.filebox legend { margin-left: 1px; padding: 0 3px; line-height: 14px; }
.filerow { display: flex; align-items: center; height: 27px; white-space: nowrap; }
.filerow > input { flex: 1; min-width: 40px; height: 26px; margin: 0 6px 0 5px; border: 1px solid #7a8a99; background: #fff; }
.jbtn { border: 1px solid #7a8a99; background: linear-gradient(#dde8f3, #fff 30%, #b8cfe5); }
.small { width: 77px; height: 24px; margin-right: 4px; font-size: 10px; font-weight: normal; }
.only { margin-right: 4px; }
.check { display: flex; align-items: center; gap: 3px; }
.filerow .check { margin-right: 14px; }
.filerow .check + .check { margin-right: 12px; }
.check input { appearance: none; width: 13px; height: 13px; border: 1px solid #7a8a99; background: linear-gradient(#fff, #b8cfe5); }
.check input:checked { position: relative; }
.check input:checked::after { content: ""; position: absolute; left: 3px; top: 0; width: 4px; height: 8px; border: solid #333; border-width: 0 2px 2px 0; rotate: 40deg; }
.conf { width: 89px; height: 26px; }
.grid-scroll { flex: 1; min-height: 0; margin-top: 7px; overflow: hidden; border: 1px solid #7a8a99; border-left: 0; }
.results { width: 100%; table-layout: fixed; border-collapse: separate; border-spacing: 0; font-weight: normal; background: #fff; }
.results th { height: 20px; padding: 0; font-weight: normal; background: #eee; border: 1px solid; border-color: #fff #7a8a99 #7a8a99 #fff; white-space: nowrap; }
.results td { height: 16px; padding: 0 1px; line-height: 15px; text-align: right; white-space: nowrap; overflow: hidden; border: solid #7a8a99; border-width: 0 1px 1px 0; }
.results td:first-child { text-align: left; }
.save-row { display: flex; align-items: center; justify-content: center; gap: 8px; height: 37px; flex: none; }
.save { width: 125px; height: 26px; }

/* taskbar */
.taskbar { display: flex; align-items: center; height: 30px; flex: none; padding: 2px 2px 0; background: #ece9d8; border-top: 1px solid #d8d4c4; box-shadow: inset 0 1px #fff; color: #000; font: 12px/20px "Noto Sans", sans-serif; }
.start { display: flex; align-items: center; gap: 2px; width: 53px; height: 24px; padding: 0 1px; font-weight: bold; border: 1px solid; border-color: #fff #716f64 #716f64 #fff; box-shadow: inset -1px -1px #aca899; }
.start svg { width: 16px; height: 16px; }
.tsep { flex: none; width: 3px; height: 20px; margin: 0 6px 0 7px; border: 1px solid; border-color: #fff #aca899 #aca899 #fff; }
.quick { display: flex; gap: 8px; margin: 0 2px 0 1px; }
.quick svg { width: 16px; height: 16px; }
.tsep + .tasks { margin-left: -2px; }
.tasks { flex: 1; min-width: 0; display: flex; gap: 4px; }
.tasks button { flex: 0 1 159px; min-width: 0; display: flex; align-items: center; gap: 4px; height: 24px; padding: 0 3px; overflow: hidden; border: 1px solid; border-color: #fff #716f64 #716f64 #fff; box-shadow: inset -1px -1px #aca899; }
.tasks .ic { width: 16px; height: 14px; }
.tasks .current { font-weight: bold; background: repeating-conic-gradient(#fff 0 25%, #ece9d8 0 50%) 0 0 / 2px 2px; border-color: #716f64 #fff #fff #716f64; box-shadow: none; }
.lone { margin-right: 9px; }
.qhelp svg { width: 16px; height: 16px; }
.thin { width: 2px; height: 24px; border-width: 0 0 0 1px; border-color: #aca899; margin: 0 4px; }
.stack svg { width: 10px; height: 17px; margin-right: 7px; }
.tray { display: flex; align-items: center; gap: 10px; width: 90px; height: 24px; padding: 0 5px; border: 1px solid; border-color: #aca899 #fff #fff #aca899; }
.tray svg { width: 9px; height: 7px; }
.tray time { white-space: nowrap; }
```
